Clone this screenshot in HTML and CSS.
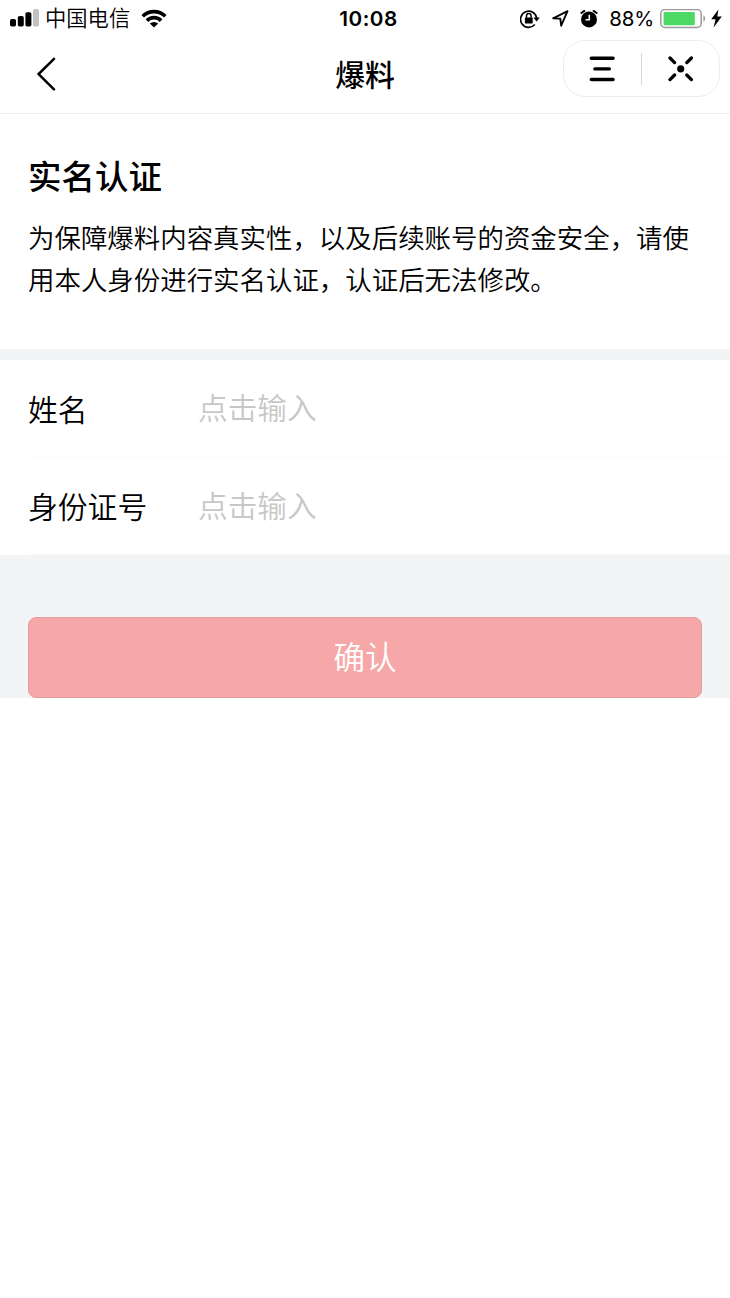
FILE: index.html
```
<!DOCTYPE html>
<html lang="zh-CN">
<head>
  <meta charset="utf-8">
  <title>爆料</title>
  <link rel="stylesheet" href="styles.css">
</head>
<body>
  <div class="status-bar">
    <div class="status-left">
      <svg class="signal" width="29" height="18" viewBox="0 0 29 18">
        <rect x="0" y="10" width="6" height="7.5" rx="1.8"/>
        <rect x="7.8" y="7" width="6" height="10.5" rx="1.8"/>
        <rect x="15.4" y="3.3" width="6" height="14.2" rx="1.8"/>
        <rect x="23" y="0" width="6" height="17.5" rx="1.8" fill="#c1c1c1"/>
      </svg>
      <span class="carrier">中国电信</span>
      <svg class="wifi" width="26" height="20" viewBox="0 0 26 20">
        <g fill="none" stroke="#000" stroke-width="3.7">
          <path d="M1.7 7.2a16 16 0 0 1 22.6 0"/>
          <path d="M5.9 11.6a10 10 0 0 1 14.2 0"/>
        </g>
        <path d="M8.8 14.6a6 6 0 0 1 8.4 0L13 18.6z"/>
      </svg>
    </div>
    <div class="clock">10:08</div>
    <div class="status-right">
      <svg class="lock" width="20" height="20" viewBox="0 0 20 20">
        <path d="M14.8 15.6a8.1 8.1 0 1 1 1.9-6.4" fill="none" stroke="#000" stroke-width="1.6"/>
        <path d="M13.4 8.4h6.4l-3.2 4z"/>
        <rect x="4.9" y="8.4" width="7.8" height="6" rx=".6"/>
        <path d="M6.5 9V6.8a2.3 2.3 0 0 1 4.6 0V9" fill="none" stroke="#000" stroke-width="1.4"/>
      </svg>
      <svg class="location" width="17" height="17" viewBox="0 0 17 17">
        <path d="M1.2 8.3L15.5 1.2 9.2 15.7 8.3 8.6z" fill="none" stroke="#000" stroke-width="1.9" stroke-linejoin="round"/>
      </svg>
      <svg class="alarm" width="18" height="18" viewBox="0 0 18 18">
        <circle cx="9" cy="9.4" r="8"/>
        <path d="M1.3 3l3-2.1M16.7 3l-3-2.1" stroke="#000" stroke-width="1.9" stroke-linecap="round"/>
        <path d="M9.3 4.8v5H5.5" fill="none" stroke="#fff" stroke-width="1.5"/>
      </svg>
      <span class="percent">88%</span>
      <svg class="battery" width="46" height="20" viewBox="0 0 46 20">
        <rect x=".8" y=".5" width="40.4" height="18" rx="4.2" fill="none" stroke="#9b9b9b" stroke-width="1.5"/>
        <rect x="3.6" y="2.9" width="31.2" height="13.3" rx="1.2" fill="#4cd964"/>
        <path d="M43.4 6.3c2.3 1 2.3 5.4 0 6.4z" fill="#9b9b9b"/>
      </svg>
      <svg class="bolt" width="11" height="19" viewBox="0 0 11 19">
        <path d="M7.4.5L.2 10.2h4.3L2.6 18.4 10.8 7.6H6.3z"/>
      </svg>
    </div>
  </div>

  <div class="navbar">
    <a class="back">
      <svg width="20" height="34" viewBox="0 0 20 34">
        <path d="M18 1.8L2.6 17.1 18 32.4" fill="none" stroke="#000" stroke-width="2.5" stroke-linecap="round"/>
      </svg>
    </a>
    <h1 class="nav-title">爆料</h1>
    <div class="capsule">
      <svg width="26" height="26" viewBox="0 0 26 26">
        <path d="M2.3 2.3h21.8M5.9 12.9h14.4M2.3 23.5h21.8" stroke="#000" stroke-width="3.4" stroke-linecap="round"/>
      </svg>
      <span class="divider"></span>
      <svg width="26" height="26" viewBox="0 0 26 26">
        <path d="M2 2l4.6 4.6M23.4 2l-4.6 4.6M2 23.6L6.6 19M23.4 23.6L18.8 19" stroke="#000" stroke-width="3.3" stroke-linecap="round"/>
        <circle cx="12.7" cy="12.8" r="3.6"/>
      </svg>
    </div>
  </div>

  <div class="intro">
    <h2>实名认证</h2>
    <p>为保障爆料内容真实性，以及后续账号的资金安全，请使用本人身份进行实名认证，认证后无法修改。</p>
  </div>

  <form class="form">
    <div class="row">
      <label for="name">姓名</label>
      <input id="name" type="text" placeholder="点击输入">
    </div>
    <div class="row">
      <label for="idcard">身份证号</label>
      <input id="idcard" type="text" placeholder="点击输入">
    </div>
    <div class="submit">
      <button type="button">确认</button>
    </div>
  </form>
</body>
</html>
```
FILE: styles.css
```
* {
  box-sizing: border-box;
}

body {
  margin: 0;
  background: #fff;
  color: #000;
  font-family: "Noto Sans CJK SC", sans-serif;
  font-weight: 350;
}

svg {
  display: block;
  flex: none;
}

/* status bar */
.status-bar {
  display: grid;
  grid-template-columns: 1fr auto 1fr;
  align-items: center;
  height: 37px;
  padding: 0 8px 0 10px;
}

.status-left,
.status-right {
  display: flex;
  align-items: center;
  height: 36px;
}

.signal {
  margin-bottom: 1px;
}

.status-right {
  justify-content: flex-end;
}

.carrier {
  margin: 0 11px 0 6px;
  padding-bottom: 4px;
  font-size: 21.3px;
  line-height: 32px;
}

.clock {
  padding-left: 5px;
  font-family: Inter, sans-serif;
  font-size: 20.7px;
  font-weight: 600;
  letter-spacing: 0.5px;
}

.location {
  margin-left: 12px;
}

.alarm {
  margin-left: 11px;
}

.percent {
  margin: 0 6px 0 11px;
  font-family: Inter, sans-serif;
  font-size: 20.4px;
  font-weight: 400;
  letter-spacing: -0.2px;
}

.bolt {
  margin-left: 5px;
}

/* navbar */
.navbar {
  display: grid;
  grid-template-columns: 1fr auto 1fr;
  align-items: center;
  height: 77px;
  padding: 0 10px;
  border-bottom: 1px solid #efefef;
}

.back {
  margin: 0 0 2px 26px;
}

.nav-title {
  margin: 0 0 5px;
  font-size: 29.8px;
  font-weight: 500;
  line-height: 44px;
}

.capsule {
  display: flex;
  align-items: center;
  justify-content: space-between;
  justify-self: end;
  width: 157px;
  height: 57px;
  margin-bottom: 13px;
  padding: 0 25px;
  border: 1px solid #ededed;
  border-radius: 22px;
}

.divider {
  width: 1px;
  height: 32px;
  background: #d8d8d8;
}

/* intro */
.intro {
  height: 246px;
  padding: 36px 28px 0;
  border-bottom: 11px solid #f3f4f6;
}

.intro h2 {
  margin: 0;
  font-size: 33.5px;
  font-weight: 500;
  line-height: 50px;
}

.intro p {
  margin: 16px -6px 0 0;
  font-size: 26.45px;
  line-height: 42px;
}

/* form */
.row {
  display: flex;
  align-items: center;
  height: 97.5px;
  margin-left: 28px;
  border-bottom: 1px solid #f9f9f9;
}

.row label {
  width: 170px;
  padding-bottom: 1px;
  font-size: 29.8px;
}

.row input {
  flex: 1;
  min-width: 0;
  padding: 0 0 3px;
  border: 0;
  outline: 0;
  font-family: inherit;
  font-size: 29.7px;
  font-weight: 350;
}

.row input::placeholder {
  color: #c7c7c7;
}

.submit {
  padding: 62px 28px 0;
  background: #f3f4f6;
}

.submit button {
  display: block;
  width: 100%;
  height: 81px;
  padding: 0 0 5px;
  border: 1px solid #e79da0;
  border-radius: 8px;
  background: #f6a8a8;
  color: #fff;
  font-family: inherit;
  font-size: 31.5px;
  font-weight: 350;
}
```
